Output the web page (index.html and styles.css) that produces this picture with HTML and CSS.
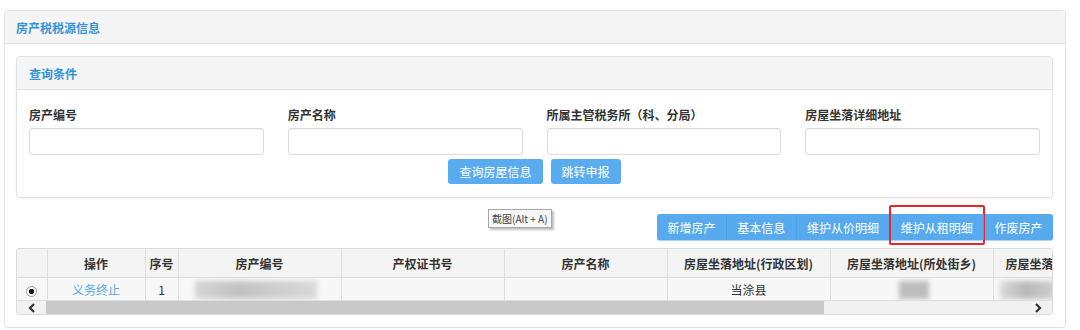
FILE: index.html
```html
<!DOCTYPE html>
<html>
<head>
    <title>房产税税源信息</title>
    <link rel="stylesheet" href="styles.css">
</head>
<body>
    <div class="panel">
        <div class="panel-heading">房产税税源信息</div>
        <div class="panel-body">

            <div class="panel inner">
                <div class="panel-heading">查询条件</div>
                <div class="query">
                    <div class="fields">
                        <div class="field">
                            <label>房产编号</label>
                            <input type="text">
                        </div>
                        <div class="field">
                            <label>房产名称</label>
                            <input type="text">
                        </div>
                        <div class="field">
                            <label>所属主管税务所（科、分局）</label>
                            <input type="text">
                        </div>
                        <div class="field">
                            <label>房屋坐落详细地址</label>
                            <input type="text">
                        </div>
                    </div>
                    <div class="actions">
                        <button class="btn">查询房屋信息</button>
                        <button class="btn">跳转申报</button>
                    </div>
                </div>
            </div>

            <div class="toolbar">
                <div class="tip">截图(Alt + A)</div>
                <div class="btn-group">
                    <button>新增房产</button>
                    <button>基本信息</button>
                    <button>维护从价明细</button>
                    <button class="marked">维护从租明细</button>
                    <button>作废房产</button>
                </div>
            </div>

            <div class="grid">
                <div class="grid-view">
                    <table>
                        <colgroup>
                            <col class="c-radio">
                            <col class="c-op">
                            <col class="c-no">
                            <col class="c-wide">
                            <col class="c-wide">
                            <col class="c-wide">
                            <col class="c-wide">
                            <col class="c-wide">
                            <col class="c-wide">
                        </colgroup>
                        <thead>
                            <tr>
                                <th></th>
                                <th>操作</th>
                                <th>序号</th>
                                <th>房产编号</th>
                                <th>产权证书号</th>
                                <th>房产名称</th>
                                <th>房屋坐落地址(行政区划)</th>
                                <th>房屋坐落地址(所处街乡)</th>
                                <th class="cut">房屋坐落详细地址</th>
                            </tr>
                        </thead>
                        <tbody>
                            <tr>
                                <td><span class="radio"></span></td>
                                <td><a href="#">义务终止</a></td>
                                <td>1</td>
                                <td class="left"><span class="smudge s-code"></span></td>
                                <td></td>
                                <td></td>
                                <td>当涂县</td>
                                <td><span class="smudge s-street"></span></td>
                                <td class="left"><span class="smudge s-addr"></span></td>
                            </tr>
                        </tbody>
                    </table>
                </div>
                <div class="hscroll">
                    <span class="arrow">
                        <svg width="8" height="10" viewBox="0 0 8 10"><path d="M6 1 L2 5 L6 9" fill="none" stroke="#333" stroke-width="2.2"/></svg>
                    </span>
                    <span class="thumb"></span>
                    <span class="track"></span>
                    <span class="arrow">
                        <svg width="8" height="10" viewBox="0 0 8 10"><path d="M2 1 L6 5 L2 9" fill="none" stroke="#333" stroke-width="2.2"/></svg>
                    </span>
                </div>
            </div>

        </div>
    </div>
</body>
</html>
```

FILE: styles.css
```css
body {
    margin: 10px 14px 0 4px;
    font-family: "Noto Sans CJK SC", "Liberation Sans", sans-serif;
    font-size: 12px;
    color: #333;
    background: #fff;
}
.panel {
    background: #fff;
    border: 1px solid #e2e2e2;
    border-radius: 4px;
    box-shadow: 0 1px 2px rgba(0, 0, 0, 0.05);
}
.panel-heading {
    height: 32px;
    line-height: 33px;
    padding: 0 11px;
    background: #f5f5f5;
    border-bottom: 1px solid #e0e0e0;
    border-radius: 4px 4px 0 0;
    color: #3493de;
    font-weight: bold;
}
.panel-body {
    padding: 12px 12px 12px 11px;
}
.inner .panel-heading {
    padding: 0 12px;
}
.query {
    padding: 16px 0 13px;
}
.fields {
    display: grid;
    grid-template-columns: repeat(4, 1fr);
}
.field {
    padding: 0 12px;
}
.field label {
    display: block;
    line-height: 18px;
    margin-bottom: 4px;
    font-weight: bold;
    color: #333;
}
.field input {
    display: block;
    box-sizing: border-box;
    width: 100%;
    height: 27px;
    border: 1px solid #dcdcdc;
    border-radius: 3px;
    box-shadow: inset 0 1px 1px rgba(0, 0, 0, 0.04);
}
.actions {
    display: flex;
    justify-content: center;
    gap: 8px;
    margin-top: 4px;
}
.btn {
    height: 25px;
    padding: 0 11px;
    border: none;
    border-radius: 3px;
    background: #5aacf0;
    color: #fff;
    font-family: inherit;
    font-size: 12px;
}
.toolbar {
    position: relative;
    display: flex;
    justify-content: flex-end;
    margin-top: 16px;
}
.tip {
    position: absolute;
    left: 472px;
    top: -5px;
    padding: 0 3px;
    height: 17px;
    line-height: 17px;
    font-size: 10px;
    color: #444;
    background: #f7f7f7;
    border: 1px solid #a8a8a8;
    box-shadow: 2px 2px 2px rgba(0, 0, 0, 0.25);
}
.btn-group {
    display: flex;
    border-radius: 3px;
    background: #58aaef;
    border-bottom: 1px solid #a9d3f6;
}
.btn-group button {
    position: relative;
    height: 26px;
    padding: 0 10.4px;
    border: none;
    border-left: 1px solid #4f9fe3;
    background: transparent;
    color: #fff;
    font-family: inherit;
    font-size: 12px;
}
.btn-group button:first-child {
    border-left: none;
}
.marked::after {
    content: "";
    position: absolute;
    top: -9px;
    bottom: -5px;
    left: -1px;
    right: -2px;
    border: 2px solid #e8262b;
    border-radius: 2px;
}
.grid {
    margin-top: 7px;
    border: 1px solid #dcdcdc;
    border-radius: 3px;
    overflow: hidden;
}
.grid-view {
    overflow: hidden;
}
table {
    table-layout: fixed;
    border-collapse: collapse;
    width: 1139px;
}
.c-radio { width: 30px; }
.c-op { width: 98px; }
.c-no { width: 33px; }
.c-wide { width: 163px; }
th, td {
    border-right: 1px solid #dedede;
    border-bottom: 1px solid #dedede;
    text-align: center;
    white-space: nowrap;
    overflow: hidden;
    padding: 0;
}
th {
    height: 28px;
    background: #f4f4f4;
    font-weight: bold;
    color: #333;
}
th.cut {
    text-align: left;
    padding-left: 12px;
}
td {
    height: 22px;
    background: #f7f7f7;
    color: #333;
}
td.left {
    text-align: left;
}
td a {
    color: #5aa9ee;
    text-decoration: none;
}
.radio {
    display: inline-block;
    width: 9px;
    height: 9px;
    border: 1px solid #9a9a9a;
    border-radius: 50%;
    background: radial-gradient(circle, #111 0 2.5px, #fff 3px);
    vertical-align: middle;
}
.smudge {
    display: inline-block;
    height: 18px;
    vertical-align: middle;
    filter: blur(2.5px);
}
.s-code {
    width: 122px;
    margin-left: 16px;
    background: linear-gradient(90deg, #d6d6d6, #c2c2c2 35%, #cdcdcd 65%, #dadada);
}
.s-street {
    width: 30px;
    margin-left: 4px;
    background: #bdbdbd;
}
.s-addr {
    width: 58px;
    margin-left: 6px;
    background: linear-gradient(90deg, #dadada, #b8b8b8 45%, #d2d2d2);
}
.hscroll {
    display: flex;
    height: 13px;
    background: #f1f1f1;
}
.arrow {
    display: flex;
    align-items: center;
    justify-content: center;
    width: 29px;
}
.thumb {
    width: 778px;
    background: #c9c9c9;
}
.track {
    flex: 1;
}
```
